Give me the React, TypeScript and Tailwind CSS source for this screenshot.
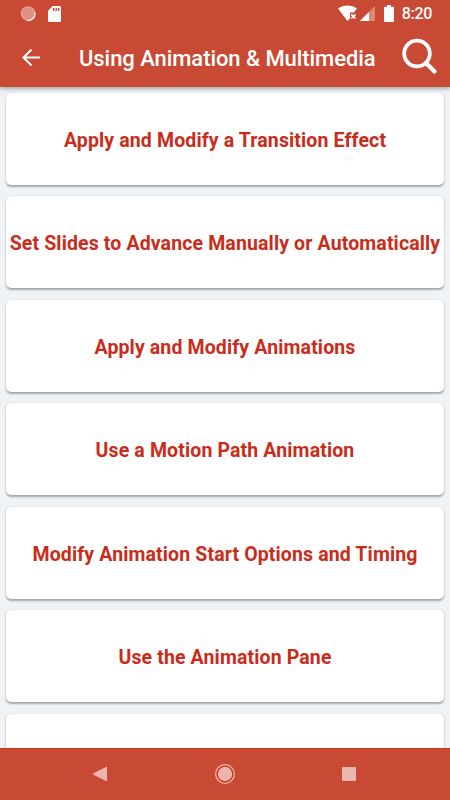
import React from 'react';

const lessons = [
  'Apply and Modify a Transition Effect',
  'Set Slides to Advance Manually or Automatically',
  'Apply and Modify Animations',
  'Use a Motion Path Animation',
  'Modify Animation Start Options and Timing',
  'Use the Animation Pane',
  '',
];

function StatusBar() {
  return (
    <div className="flex h-7 items-center justify-between pl-5 pr-[18px] text-white">
      <div className="flex items-center gap-3">
        <svg width="16" height="16" viewBox="0 0 16 16">
          <circle cx="8" cy="7.500" r="7.300" fill="#fff" fillOpacity="0.4" />
          <circle cx="8" cy="7.500" r="6.500" fill="none" stroke="#fff" strokeOpacity="0.4" strokeWidth="1" strokeDasharray="1 1" />
          <path d="M15 6.500a7 7 0 0 1-8 8" fill="none" stroke="#fff" strokeOpacity="0.85" strokeWidth="1.300" />
        </svg>
        <svg width="13" height="16" viewBox="0 0 13 16">
          <path fill="#fff" d="M4.500 0h7A1.500 1.500 0 0 1 13 1.500v13a1.500 1.500 0 0 1-1.500 1.500h-10A1.500 1.500 0 0 1 0 14.500V5z" />
          <path d="M5.700 2v3M8.200 2v3M10.700 2v3" stroke="#c93415" strokeWidth="1.300" />
        </svg>
      </div>
      <div className="flex items-center">
        <svg className="-mt-0.5" width="20" height="16" viewBox="0 0 20 16">
          <path fill="#fff" d="M0 3.500C5.300-.5 13.700-.5 19 3.500L15.800 7.500H12v5.700L9.500 16z" />
          <path d="m13.300 9.300 4.200 4.200m0-4.200-4.200 4.200" fill="none" stroke="#fff" strokeWidth="1.700" />
        </svg>
        <svg className="-mt-0.5 ml-0.5" width="15" height="15" viewBox="0 0 15 15">
          <path fill="#fff" fillOpacity="0.35" d="M15 0v15H0z" />
          <path fill="#fff" d="M9 6v9H0z" />
        </svg>
        <svg className="-mt-0.5 ml-[9px]" width="10" height="17" viewBox="0 0 10 17">
          <path fill="#fff" d="M3 0h4v1.700h2a1 1 0 0 1 1 1V16a1 1 0 0 1-1 1H1a1 1 0 0 1-1-1V2.700a1 1 0 0 1 1-1h2z" />
        </svg>
        <span className="ml-2 text-base font-medium leading-7 tracking-[-0.3px]">8:20</span>
      </div>
    </div>
  );
}

function Header() {
  return (
    <header className="relative z-10 h-[87px] shrink-0 bg-[#c94a34] shadow-[0_2px_4px_rgba(0,0,0,0.3)]">
      <StatusBar />
      <div className="flex h-[59px] items-center pl-[22px] pr-3">
        <button aria-label="Back">
          <svg width="18" height="18" viewBox="0 0 18 18" fill="none" stroke="#fff" strokeWidth="2">
            <path d="M18 8.500H2M9.500.5 1.500 8.500l8 8" />
          </svg>
        </button>
        <h1 className="ml-[39px] mt-px flex-1 whitespace-nowrap text-[22px] font-medium tracking-[-0.06px] text-white">Using Animation &amp; Multimedia</h1>
        <button aria-label="Search" className="-mt-1">
          <svg width="36" height="38" viewBox="0 0 36 38" fill="none" stroke="#fff">
            <circle cx="15" cy="16.500" r="12.800" strokeWidth="3.800" />
            <path d="m24 26 8.500 8.500" strokeWidth="4.300" strokeLinecap="round" />
          </svg>
        </button>
      </div>
    </header>
  );
}

function LessonCard({ title }: { title: string }) {
  return (
    <li className="flex h-[92px] shrink-0 items-center justify-center rounded-[5px] bg-white shadow-[0_1.5px_2px_rgba(0,0,0,0.3),0_0_1px_rgba(0,0,0,0.15)]">
      <span className="mt-[3px] whitespace-nowrap text-[19.5px] font-bold tracking-[0.13px] text-[#c92c1a]">{title}</span>
    </li>
  );
}

function NavBar() {
  return (
    <nav className="flex h-[52px] shrink-0 items-center justify-between border-t border-[#cb3518] bg-[#c94a34] pb-[2px] pl-[93px] pr-[94px]">
      <svg width="14" height="14" viewBox="0 0 14 14">
        <path fill="#ebb6ae" d="M13 0a.8.8 0 0 1 1 .8v12.400a.8.8 0 0 1-1 .8L.5 7.700a.8.8 0 0 1 0-1.400z" />
      </svg>
      <svg width="20" height="20" viewBox="0 0 20 20">
        <circle cx="10" cy="10" r="9.300" fill="#c93415" stroke="#ebb6ae" strokeWidth="1.300" />
        <circle cx="10" cy="10" r="7.200" fill="#ebb6ae" />
      </svg>
      <svg width="14" height="14" viewBox="0 0 14 14">
        <rect width="14" height="14" rx="1" fill="#ebb6ae" />
      </svg>
    </nav>
  );
}

export default function App() {
  return (
    <div className="flex h-[800px] w-[450px] flex-col overflow-hidden bg-[#eff3f6] font-['Roboto',sans-serif]">
      <Header />
      <main className="min-h-0 flex-1 overflow-hidden px-1.5 pt-1.5">
        <ul className="flex flex-col gap-[11.450px]">
          {lessons.map((title, i) => (
            <LessonCard key={i} title={title} />
          ))}
        </ul>
      </main>
      <NavBar />
    </div>
  );
}
